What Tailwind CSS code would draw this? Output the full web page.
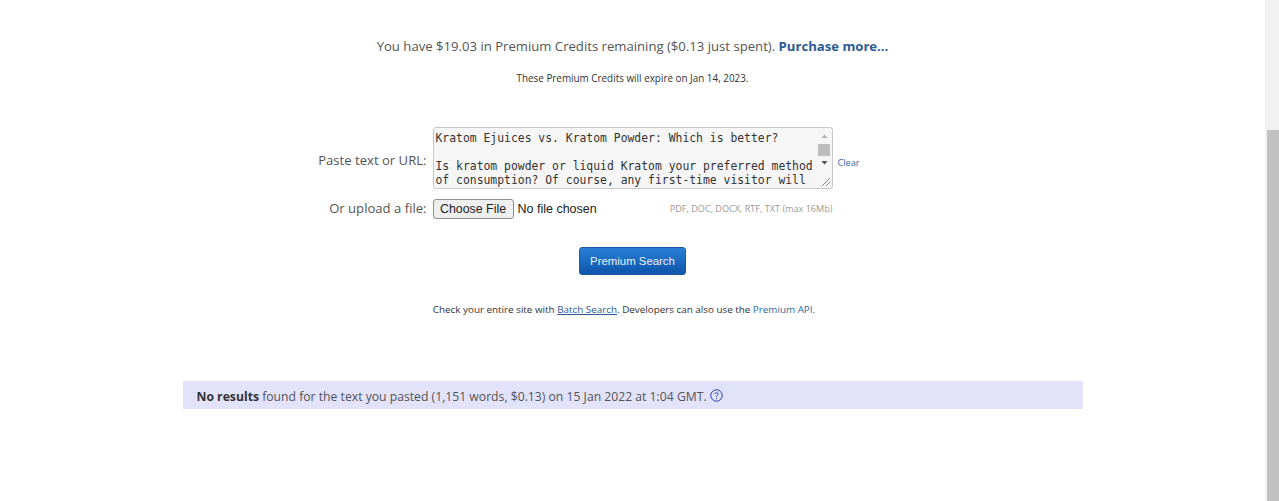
<!DOCTYPE html>
<html lang="en">
  <head>
    <meta charset="UTF-8" />
    <meta name="viewport" content="width=device-width, initial-scale=1.0" />
    <title>Premium Search</title>
    <script src="https://cdn.jsdelivr.net/npm/@tailwindcss/browser@4"></script>
  </head>
  <body class="bg-white overflow-hidden font-['Open_Sans',sans-serif]">
    <div class="flex h-[501px]">
      <main class="w-[1265px] flex flex-col items-center pt-[37px] text-[#555]">
        <p class="text-[13.13px] leading-[18px]">
          You have $19.03 in Premium Credits remaining ($0.13 just spent).
          <a href="#" class="font-bold text-[#2c5a96]">Purchase more...</a>
        </p>
        <p class="mt-[16px] text-[9.9px] leading-[14px] text-[#333]">These Premium Credits will expire on Jan 14, 2023.</p>

        <!-- form -->
        <form class="mt-[42px] w-[900px] flex flex-col">
          <div class="flex items-center h-[62px]">
            <label class="w-[244px] pt-[6px] text-right text-[13.1px] text-[#555]">Paste text or URL:</label>
            <div class="relative ml-[6px] w-[400px] h-[62px]">
              <textarea readonly rows="4" class="block w-full h-full resize-none overflow-hidden bg-[#f6f6f6] border border-[#c8c8c8] rounded-[3px] pl-[2px] pr-[17px] pt-[3px] font-['DejaVu_Sans_Mono',monospace] text-[11.4px] leading-[14px] text-[#333]">Kratom Ejuices vs. Kratom Powder: Which is better?

Is kratom powder or liquid Kratom your preferred method of consumption? Of course, any first-time visitor will</textarea>
              <!-- textarea scrollbar -->
              <div class="absolute right-[1px] top-[2px] bottom-[1px] w-[15px] flex flex-col items-center">
                <svg width="15" height="15" viewBox="0 0 15 15"><path d="M4.5 9 L7.5 5.5 L10.5 9 Z" fill="#b0b0b0" /></svg>
                <div class="w-[12px] h-[12px] bg-[#bdbdbd]"></div>
                <svg width="15" height="14" viewBox="0 0 15 14"><path d="M4.5 5 L7.5 8.5 L10.5 5 Z" fill="#505050" /></svg>
                <div class="flex-1"></div>
                <svg width="15" height="15" viewBox="0 0 15 15"><path d="M5 13 L13 5 M9 13 L13 9" stroke="#888" stroke-width="1" /></svg>
              </div>
            </div>
            <a href="#" class="ml-[5px] pt-[9px] text-[9.2px] text-[#2c6aa0]">Clear</a>
          </div>
          <div class="flex items-center mt-[9px] h-[22px]">
            <label class="w-[244px] text-right text-[13.1px] text-[#555]">Or upload a file:</label>
            <div class="ml-[6px] w-[400px] flex items-center justify-between">
              <input type="file" class="w-[200px] font-['Liberation_Sans',sans-serif] text-[12.5px] text-[#222] file:mr-[4px] file:h-[20px] file:w-[81px] file:px-0 file:border file:border-[#8f8f8f] file:rounded-[3px] file:bg-[#efefef] file:text-[12.4px] file:text-[#222]" />
              <span class="text-[9.1px] text-[#999]">PDF, DOC, DOCX, RTF, TXT (max 16Mb)</span>
            </div>
          </div>
          <div class="flex justify-center mt-[27px]">
            <button type="button" class="w-[107px] h-[28px] pt-[2px] rounded-[3px] border border-[#1a5aa8] bg-gradient-to-b from-[#2a7fd6] to-[#0f55ab] font-['Liberation_Sans',sans-serif] text-[11.4px] text-[#e8f1fb]">Premium Search</button>
          </div>
        </form>

        <p class="mt-[27px] pr-[17px] text-[9.85px] leading-[14px] text-[#333]">
          Check your entire site with <a href="#" class="underline text-[#2c5a96]">Batch Search</a>. Developers can also use the <a href="#" class="text-[#2c6aa0]">Premium API</a>.
        </p>

        <!-- result -->
        <div class="mt-[65px] w-[900px] h-[28px] bg-[#e2e2fa] flex items-center pl-[14px] pt-[4px] text-[12.2px] text-[#555]">
          <span><b class="text-[#333]">No results</b> found for the text you pasted (1,151 words, $0.13) on 15 Jan 2022 at 1:04 GMT.</span>
          <svg class="ml-[3px] -mt-[4px]" width="13" height="13" viewBox="0 0 13 13" fill="none">
            <circle cx="6.5" cy="6.5" r="5.7" stroke="#2438b0" stroke-width="1" />
            <path d="M4.8 5.2 C4.8 3.2 8.2 3.2 8.2 5.2 C8.2 6.4 6.5 6.4 6.5 7.8" stroke="#2438b0" stroke-width="1" />
            <circle cx="6.5" cy="9.6" r="0.6" fill="#2438b0" />
          </svg>
        </div>
      </main>

      <!-- page scrollbar -->
      <div class="w-[14px] bg-[#f1f1f1] flex flex-col">
        <div class="flex-none h-[130px]"></div>
        <div class="flex-1 ml-[2px] bg-[#c1c1c1]"></div>
      </div>
    </div>
  </body>
</html>
